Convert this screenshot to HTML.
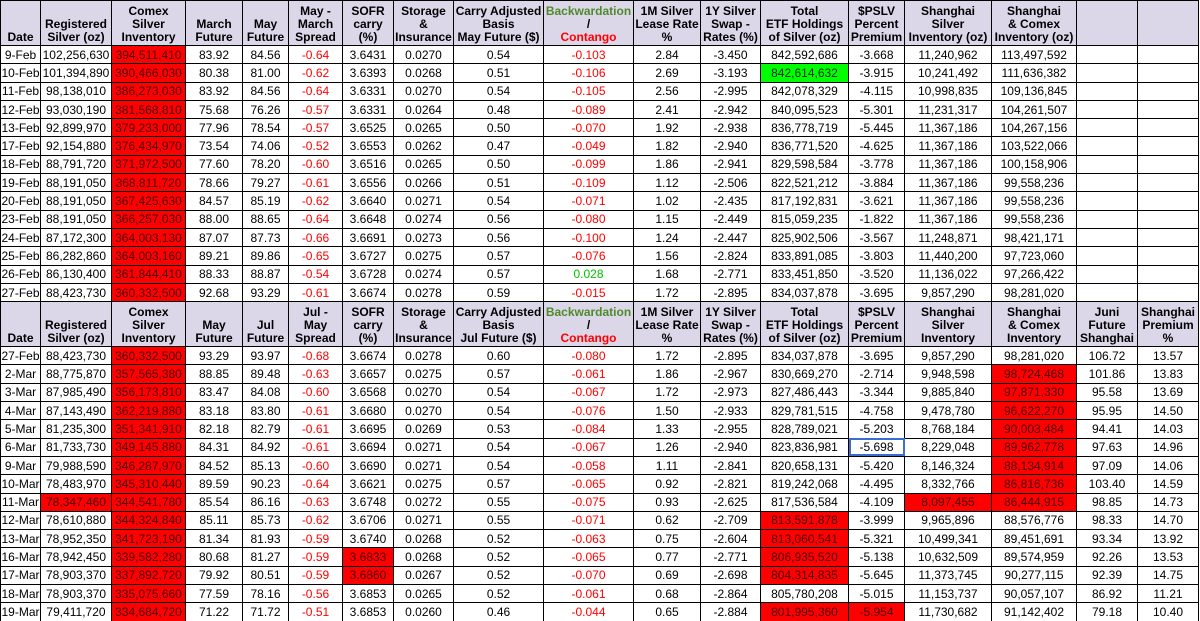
<!DOCTYPE html>
<html><head><meta charset="utf-8">
<style>
html,body{margin:0;padding:0;background:#fff;width:1200px;height:621px;overflow:hidden}
table{border-collapse:collapse;table-layout:fixed;width:1198px;font-family:"Liberation Sans",Arial,sans-serif;font-size:12px;color:#000}
td{border:1px solid #000;text-align:center;padding:0;white-space:nowrap;overflow:hidden;height:17.3px;line-height:16px}
tr.h td{background:#dcd6e9;font-weight:bold;height:43px;line-height:13px;vertical-align:bottom;padding-bottom:1px}
tr.h td.e{background:#dcd6e9}
td.r{background:#ff0000;color:#4a0000}
td.g{background:#00ff00;color:#003000}
.n{color:#ff0000}
.gt{color:#00c000}
.bw{color:#4e8a2a}
.ct{color:#ff0000}
td.sel{outline:2px solid #3a6fd0;outline-offset:-2px}
tr.h td.d{vertical-align:bottom}
</style></head><body>
<table>
<colgroup>
<col style="width:40px"><col style="width:71px"><col style="width:74px"><col style="width:57px"><col style="width:46px"><col style="width:54px"><col style="width:51px"><col style="width:60px"><col style="width:90px"><col style="width:90px"><col style="width:67px"><col style="width:60px"><col style="width:88px"><col style="width:56px"><col style="width:87px"><col style="width:85px"><col style="width:61px"><col style="width:61px">
</colgroup>
<tr class="h"><td>Date</td><td>Registered<br>Silver (oz)</td><td>Comex<br>Silver<br>Inventory</td><td>March<br>Future</td><td>May<br>Future</td><td>May -<br>March<br>Spread</td><td>SOFR<br>carry<br>(%)</td><td>Storage<br>&amp;<br>Insurance</td><td>Carry Adjusted<br>Basis<br>May Future ($)</td><td><span class="bw">Backwardation</span><br>/<br><span class="ct">Contango</span></td><td>1M Silver<br>Lease Rate<br>%</td><td>1Y Silver<br>Swap -<br>Rates (%)</td><td>Total<br>ETF Holdings<br>of Silver (oz)</td><td>$PSLV<br>Percent<br>Premium</td><td>Shanghai<br>Silver<br>Inventory (oz)</td><td>Shanghai<br>&amp; Comex<br>Inventory (oz)</td><td class="e"></td><td class="e"></td></tr>
<tr><td>9-Feb</td><td>102,256,630</td><td class="r">394,511,410</td><td>83.92</td><td>84.56</td><td class="n">-0.64</td><td>3.6431</td><td>0.0270</td><td>0.54</td><td class="n">-0.103</td><td>2.84</td><td>-3.450</td><td>842,592,686</td><td>-3.668</td><td>11,240,962</td><td>113,497,592</td><td></td><td></td></tr>
<tr><td>10-Feb</td><td>101,394,890</td><td class="r">390,466,030</td><td>80.38</td><td>81.00</td><td class="n">-0.62</td><td>3.6393</td><td>0.0268</td><td>0.51</td><td class="n">-0.106</td><td>2.69</td><td>-3.193</td><td class="g">842,614,632</td><td>-3.915</td><td>10,241,492</td><td>111,636,382</td><td></td><td></td></tr>
<tr><td>11-Feb</td><td>98,138,010</td><td class="r">386,273,030</td><td>83.92</td><td>84.56</td><td class="n">-0.64</td><td>3.6331</td><td>0.0270</td><td>0.54</td><td class="n">-0.105</td><td>2.56</td><td>-2.995</td><td>842,078,329</td><td>-4.115</td><td>10,998,835</td><td>109,136,845</td><td></td><td></td></tr>
<tr><td>12-Feb</td><td>93,030,190</td><td class="r">381,568,810</td><td>75.68</td><td>76.26</td><td class="n">-0.57</td><td>3.6331</td><td>0.0264</td><td>0.48</td><td class="n">-0.089</td><td>2.41</td><td>-2.942</td><td>840,095,523</td><td>-5.301</td><td>11,231,317</td><td>104,261,507</td><td></td><td></td></tr>
<tr><td>13-Feb</td><td>92,899,970</td><td class="r">379,233,000</td><td>77.96</td><td>78.54</td><td class="n">-0.57</td><td>3.6525</td><td>0.0265</td><td>0.50</td><td class="n">-0.070</td><td>1.92</td><td>-2.938</td><td>836,778,719</td><td>-5.445</td><td>11,367,186</td><td>104,267,156</td><td></td><td></td></tr>
<tr><td>17-Feb</td><td>92,154,880</td><td class="r">376,434,970</td><td>73.54</td><td>74.06</td><td class="n">-0.52</td><td>3.6553</td><td>0.0262</td><td>0.47</td><td class="n">-0.049</td><td>1.82</td><td>-2.940</td><td>836,771,520</td><td>-4.625</td><td>11,367,186</td><td>103,522,066</td><td></td><td></td></tr>
<tr><td>18-Feb</td><td>88,791,720</td><td class="r">371,972,500</td><td>77.60</td><td>78.20</td><td class="n">-0.60</td><td>3.6516</td><td>0.0265</td><td>0.50</td><td class="n">-0.099</td><td>1.86</td><td>-2.941</td><td>829,598,584</td><td>-3.778</td><td>11,367,186</td><td>100,158,906</td><td></td><td></td></tr>
<tr><td>19-Feb</td><td>88,191,050</td><td class="r">368,811,720</td><td>78.66</td><td>79.27</td><td class="n">-0.61</td><td>3.6556</td><td>0.0266</td><td>0.51</td><td class="n">-0.109</td><td>1.12</td><td>-2.506</td><td>822,521,212</td><td>-3.884</td><td>11,367,186</td><td>99,558,236</td><td></td><td></td></tr>
<tr><td>20-Feb</td><td>88,191,050</td><td class="r">367,425,630</td><td>84.57</td><td>85.19</td><td class="n">-0.62</td><td>3.6640</td><td>0.0271</td><td>0.54</td><td class="n">-0.071</td><td>1.02</td><td>-2.435</td><td>817,192,831</td><td>-3.621</td><td>11,367,186</td><td>99,558,236</td><td></td><td></td></tr>
<tr><td>23-Feb</td><td>88,191,050</td><td class="r">366,257,030</td><td>88.00</td><td>88.65</td><td class="n">-0.64</td><td>3.6648</td><td>0.0274</td><td>0.56</td><td class="n">-0.080</td><td>1.15</td><td>-2.449</td><td>815,059,235</td><td>-1.822</td><td>11,367,186</td><td>99,558,236</td><td></td><td></td></tr>
<tr><td>24-Feb</td><td>87,172,300</td><td class="r">364,003,130</td><td>87.07</td><td>87.73</td><td class="n">-0.66</td><td>3.6691</td><td>0.0273</td><td>0.56</td><td class="n">-0.100</td><td>1.24</td><td>-2.447</td><td>825,902,506</td><td>-3.567</td><td>11,248,871</td><td>98,421,171</td><td></td><td></td></tr>
<tr><td>25-Feb</td><td>86,282,860</td><td class="r">364,003,160</td><td>89.21</td><td>89.86</td><td class="n">-0.65</td><td>3.6727</td><td>0.0275</td><td>0.57</td><td class="n">-0.076</td><td>1.56</td><td>-2.824</td><td>833,891,085</td><td>-3.803</td><td>11,440,200</td><td>97,723,060</td><td></td><td></td></tr>
<tr><td>26-Feb</td><td>86,130,400</td><td class="r">361,844,410</td><td>88.33</td><td>88.87</td><td class="n">-0.54</td><td>3.6728</td><td>0.0274</td><td>0.57</td><td class="gt">0.028</td><td>1.68</td><td>-2.771</td><td>833,451,850</td><td>-3.520</td><td>11,136,022</td><td>97,266,422</td><td></td><td></td></tr>
<tr><td>27-Feb</td><td>88,423,730</td><td class="r">360,332,500</td><td>92.68</td><td>93.29</td><td class="n">-0.61</td><td>3.6674</td><td>0.0278</td><td>0.59</td><td class="n">-0.015</td><td>1.72</td><td>-2.895</td><td>834,037,878</td><td>-3.695</td><td>9,857,290</td><td>98,281,020</td><td></td><td></td></tr>
<tr class="h"><td>Date</td><td>Registered<br>Silver (oz)</td><td>Comex<br>Silver<br>Inventory</td><td>May<br>Future</td><td>Jul<br>Future</td><td>Jul -<br>May<br>Spread</td><td>SOFR<br>carry<br>(%)</td><td>Storage<br>&amp;<br>Insurance</td><td>Carry Adjusted<br>Basis<br>Jul Future ($)</td><td><span class="bw">Backwardation</span><br>/<br><span class="ct">Contango</span></td><td>1M Silver<br>Lease Rate<br>%</td><td>1Y Silver<br>Swap -<br>Rates (%)</td><td>Total<br>ETF Holdings<br>of Silver (oz)</td><td>$PSLV<br>Percent<br>Premium</td><td>Shanghai<br>Silver<br>Inventory</td><td>Shanghai<br>&amp; Comex<br>Inventory</td><td>Juni<br>Future<br>Shanghai</td><td>Shanghai<br>Premium<br>%</td></tr>
<tr><td>27-Feb</td><td>88,423,730</td><td class="r">360,332,500</td><td>93.29</td><td>93.97</td><td class="n">-0.68</td><td>3.6674</td><td>0.0278</td><td>0.60</td><td class="n">-0.080</td><td>1.72</td><td>-2.895</td><td>834,037,878</td><td>-3.695</td><td>9,857,290</td><td>98,281,020</td><td>106.72</td><td>13.57</td></tr>
<tr><td>2-Mar</td><td>88,775,870</td><td class="r">357,565,380</td><td>88.85</td><td>89.48</td><td class="n">-0.63</td><td>3.6657</td><td>0.0275</td><td>0.57</td><td class="n">-0.061</td><td>1.86</td><td>-2.967</td><td>830,669,270</td><td>-2.714</td><td>9,948,598</td><td class="r">98,724,468</td><td>101.86</td><td>13.83</td></tr>
<tr><td>3-Mar</td><td>87,985,490</td><td class="r">356,173,810</td><td>83.47</td><td>84.08</td><td class="n">-0.60</td><td>3.6568</td><td>0.0270</td><td>0.54</td><td class="n">-0.067</td><td>1.72</td><td>-2.973</td><td>827,486,443</td><td>-3.344</td><td>9,885,840</td><td class="r">97,871,330</td><td>95.58</td><td>13.69</td></tr>
<tr><td>4-Mar</td><td>87,143,490</td><td class="r">362,219,880</td><td>83.18</td><td>83.80</td><td class="n">-0.61</td><td>3.6680</td><td>0.0270</td><td>0.54</td><td class="n">-0.076</td><td>1.50</td><td>-2.933</td><td>829,781,515</td><td>-4.758</td><td>9,478,780</td><td class="r">96,622,270</td><td>95.95</td><td>14.50</td></tr>
<tr><td>5-Mar</td><td>81,235,300</td><td class="r">351,341,910</td><td>82.18</td><td>82.79</td><td class="n">-0.61</td><td>3.6695</td><td>0.0269</td><td>0.53</td><td class="n">-0.084</td><td>1.33</td><td>-2.955</td><td>828,789,021</td><td>-5.203</td><td>8,768,184</td><td class="r">90,003,484</td><td>94.41</td><td>14.03</td></tr>
<tr><td>6-Mar</td><td>81,733,730</td><td class="r">349,145,880</td><td>84.31</td><td>84.92</td><td class="n">-0.61</td><td>3.6694</td><td>0.0271</td><td>0.54</td><td class="n">-0.067</td><td>1.26</td><td>-2.940</td><td>823,836,981</td><td class="sel">-5.698</td><td>8,229,048</td><td class="r">89,962,778</td><td>97.63</td><td>14.96</td></tr>
<tr><td>9-Mar</td><td>79,988,590</td><td class="r">346,287,970</td><td>84.52</td><td>85.13</td><td class="n">-0.60</td><td>3.6690</td><td>0.0271</td><td>0.54</td><td class="n">-0.058</td><td>1.11</td><td>-2.841</td><td>820,658,131</td><td>-5.420</td><td>8,146,324</td><td class="r">88,134,914</td><td>97.09</td><td>14.06</td></tr>
<tr><td>10-Mar</td><td>78,483,970</td><td class="r">345,310,440</td><td>89.59</td><td>90.23</td><td class="n">-0.64</td><td>3.6621</td><td>0.0275</td><td>0.57</td><td class="n">-0.065</td><td>0.92</td><td>-2.821</td><td>819,242,068</td><td>-4.495</td><td>8,332,766</td><td class="r">86,816,736</td><td>103.40</td><td>14.59</td></tr>
<tr><td>11-Mar</td><td class="r">78,347,460</td><td class="r">344,541,780</td><td>85.54</td><td>86.16</td><td class="n">-0.63</td><td>3.6748</td><td>0.0272</td><td>0.55</td><td class="n">-0.075</td><td>0.93</td><td>-2.625</td><td>817,536,584</td><td>-4.109</td><td class="r">8,097,455</td><td class="r">86,444,915</td><td>98.85</td><td>14.73</td></tr>
<tr><td>12-Mar</td><td>78,610,880</td><td class="r">344,324,840</td><td>85.11</td><td>85.73</td><td class="n">-0.62</td><td>3.6706</td><td>0.0271</td><td>0.55</td><td class="n">-0.071</td><td>0.62</td><td>-2.709</td><td class="r">813,591,878</td><td>-3.999</td><td>9,965,896</td><td>88,576,776</td><td>98.33</td><td>14.70</td></tr>
<tr><td>13-Mar</td><td>78,952,350</td><td class="r">341,723,190</td><td>81.34</td><td>81.93</td><td class="n">-0.59</td><td>3.6740</td><td>0.0268</td><td>0.52</td><td class="n">-0.063</td><td>0.75</td><td>-2.604</td><td class="r">813,060,541</td><td>-5.321</td><td>10,499,341</td><td>89,451,691</td><td>93.34</td><td>13.92</td></tr>
<tr><td>16-Mar</td><td>78,942,450</td><td class="r">339,582,280</td><td>80.68</td><td>81.27</td><td class="n">-0.59</td><td class="r">3.6833</td><td>0.0268</td><td>0.52</td><td class="n">-0.065</td><td>0.77</td><td>-2.771</td><td class="r">806,935,520</td><td>-5.138</td><td>10,632,509</td><td>89,574,959</td><td>92.26</td><td>13.53</td></tr>
<tr><td>17-Mar</td><td>78,903,370</td><td class="r">337,892,720</td><td>79.92</td><td>80.51</td><td class="n">-0.59</td><td class="r">3.6860</td><td>0.0267</td><td>0.52</td><td class="n">-0.070</td><td>0.69</td><td>-2.698</td><td class="r">804,314,835</td><td>-5.645</td><td>11,373,745</td><td>90,277,115</td><td>92.39</td><td>14.75</td></tr>
<tr><td>18-Mar</td><td>78,903,370</td><td class="r">335,075,660</td><td>77.59</td><td>78.16</td><td class="n">-0.56</td><td>3.6853</td><td>0.0265</td><td>0.52</td><td class="n">-0.061</td><td>0.68</td><td>-2.864</td><td>805,780,208</td><td>-5.015</td><td>11,153,737</td><td>90,057,107</td><td>86.92</td><td>11.21</td></tr>
<tr><td>19-Mar</td><td>79,411,720</td><td class="r">334,684,720</td><td>71.22</td><td>71.72</td><td class="n">-0.51</td><td>3.6853</td><td>0.0260</td><td>0.46</td><td class="n">-0.044</td><td>0.65</td><td>-2.884</td><td class="r">801,995,360</td><td class="r">-5.954</td><td>11,730,682</td><td>91,142,402</td><td>79.18</td><td>10.40</td></tr>
</table>
</body></html>
